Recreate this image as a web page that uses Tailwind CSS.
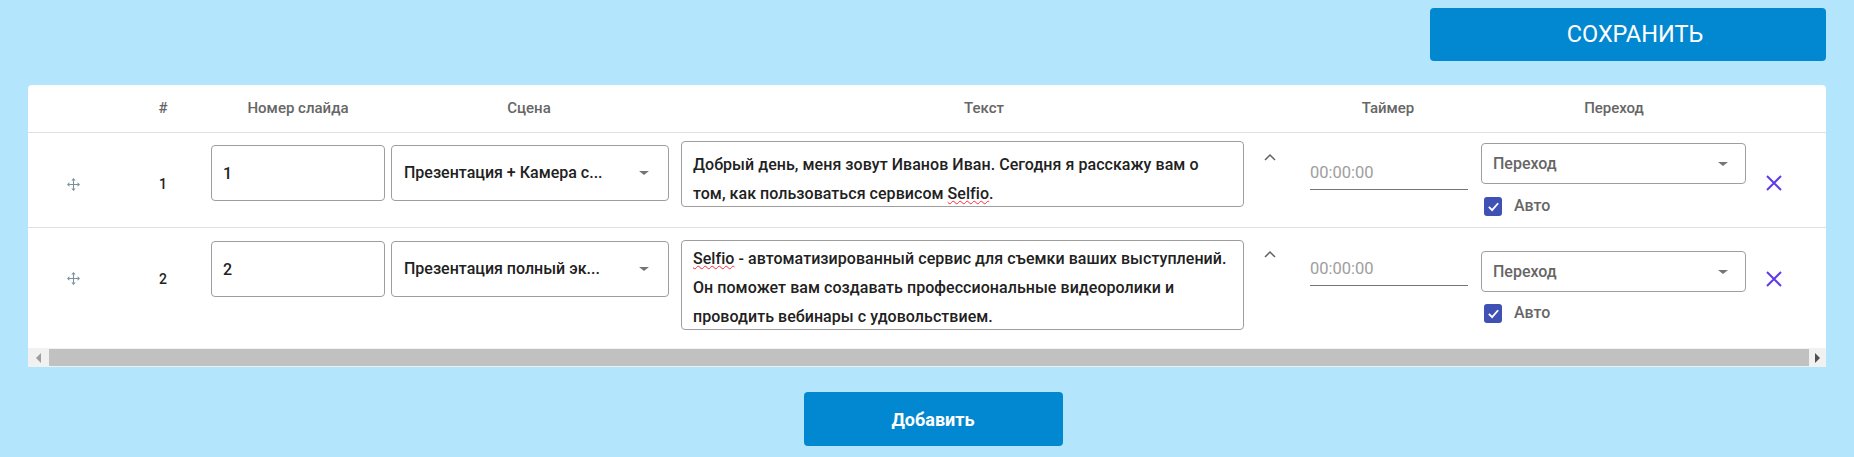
<!DOCTYPE html>
<html lang="en">
<head>
    <meta charset="UTF-8">
    <title>Сценарий</title>
    <script src="https://cdn.jsdelivr.net/npm/@tailwindcss/browser@4"></script>
</head>
<body class="bg-[#b3e5fc] h-[457px] overflow-hidden font-['Roboto',sans-serif]">
    <!-- Save -->
    <div class="flex justify-end pt-2 pr-[28px]">
        <button class="w-[396px] h-[53px] pl-[14px] bg-[#0288d1] rounded text-white text-[23.5px] uppercase">Сохранить</button>
    </div>

    <!-- Table card -->
    <div class="mx-[28px] mt-6 h-[282px] bg-white rounded-t flex flex-col">
        <div class="grid grid-cols-[90px_90px_180px_287px_618px_190px_272px_1fr] h-[48px] items-center text-center text-[15px] font-medium text-[#666] border-b border-[#e0e0e0]">
            <div></div>
            <div>#</div>
            <div>Номер слайда</div>
            <div class="pr-[5px]">Сцена</div>
            <div>Текст</div>
            <div>Таймер</div>
            <div class="pr-[10px]">Переход</div>
            <div></div>
        </div>

        <!-- Row 1 -->
        <div class="grid grid-cols-[90px_90px_180px_287px_618px_190px_272px_1fr] h-[95px] items-start border-b border-[#e0e0e0]">
            <div class="flex justify-center pt-[45px]">
                <svg class="w-[13px] h-[13px] text-[#78909c]" viewBox="0 0 12 12" fill="currentColor"><path d="M5.5 2h1v3.500H10v1H6.500V10h-1V6.500H2v-1h3.500z"/><path d="M6 0l2 2.200H4zM6 12l2-2.200H4zM0 6l2.200-2v4zM12 6l-2.200-2v4z"/></svg>
            </div>
            <div class="pt-[41px] text-center text-[14px] font-medium text-[#212121]">1</div>
            <div class="pl-[3px] pt-[12px]">
                <input value="1" class="w-[174px] h-[56px] px-[11px] border border-[#9e9e9e] rounded text-[16px] font-medium text-[#212121]">
            </div>
            <div class="pl-[3px] pt-[12px]">
                <div class="w-[278px] h-[56px] px-3 border border-[#9e9e9e] rounded flex items-center justify-between text-[16px] font-medium text-[#212121]">
                    <span>Презентация + Камера с...</span>
                    <span class="mr-[7px] border-x-[5px] border-t-[4px] border-x-transparent border-t-[#757575]"></span>
                </div>
            </div>
            <div class="flex items-start pt-[8px]">
                <div class="ml-[6px] w-[563px] h-[66px] pl-[11px] pr-[30px] pt-2 border border-[#9e9e9e] rounded text-[16px] tracking-[0.05px] font-medium leading-[29px] text-[#212121]">
                    <p>Добрый день, меня зовут Иванов Иван. Сегодня я расскажу вам о том, как пользоваться сервисом <span class="underline decoration-wavy decoration-red-500 decoration-1">Selfio</span>.</p>
                </div>
                <svg class="ml-[19px] mt-[12px] w-[14px] h-[10px] text-[#616161]" viewBox="0 0 14 10" fill="none" stroke="currentColor" stroke-width="1.500"><path d="M2 7l5-5 5 5"/></svg>
            </div>
            <div class="pl-[17px] pr-[15px] pt-[21px]">
                <div class="h-[36px] pt-[3px] border-b border-[#757575] flex items-center text-[16.5px] text-[#9e9e9e]">00:00:00</div>
            </div>
            <div class="-ml-[2px] pt-[10px]">
                <div class="w-[265px] h-[41px] px-[11px] border border-[#9e9e9e] rounded flex items-center justify-between text-[16px] font-medium text-[#666]">
                    <span>Переход</span>
                    <span class="mr-[6px] border-x-[5px] border-t-[4px] border-x-transparent border-t-[#757575]"></span>
                </div>
                <div class="mt-[10px] ml-[3px] flex items-center gap-3 text-[16px] font-medium text-[#666]">
                    <span class="w-[18px] h-[19px] rounded-[3px] bg-[#3f51b5] flex items-center justify-center">
                        <svg class="w-[13px] h-[13px]" viewBox="0 0 14 14" fill="none" stroke="white" stroke-width="2"><path d="M2 7.500l3.500 3.500L12 3.500"/></svg>
                    </span>
                    Авто
                </div>
            </div>
            <div class="pl-[10px] pt-[41px]">
                <svg class="w-[18px] h-[18px] text-[#6039ee]" viewBox="0 0 18 18" fill="none" stroke="currentColor" stroke-width="2"><path d="M2 2l14 14M16 2L2 16"/></svg>
            </div>
        </div>

        <!-- Row 2 -->
        <div class="grid grid-cols-[90px_90px_180px_287px_618px_190px_272px_1fr] h-[120px] items-start">
            <div class="flex justify-center pt-[44px]">
                <svg class="w-[13px] h-[13px] text-[#78909c]" viewBox="0 0 12 12" fill="currentColor"><path d="M5.5 2h1v3.500H10v1H6.500V10h-1V6.500H2v-1h3.500z"/><path d="M6 0l2 2.200H4zM6 12l2-2.200H4zM0 6l2.200-2v4zM12 6l-2.200-2v4z"/></svg>
            </div>
            <div class="pt-[41px] text-center text-[14px] font-medium text-[#212121]">2</div>
            <div class="pl-[3px] pt-[13px]">
                <input value="2" class="w-[174px] h-[56px] px-[11px] border border-[#9e9e9e] rounded text-[16px] font-medium text-[#212121]">
            </div>
            <div class="pl-[3px] pt-[13px]">
                <div class="w-[278px] h-[56px] px-3 border border-[#9e9e9e] rounded flex items-center justify-between text-[16px] font-medium text-[#212121]">
                    <span>Презентация полный эк...</span>
                    <span class="mr-[7px] border-x-[5px] border-t-[4px] border-x-transparent border-t-[#757575]"></span>
                </div>
            </div>
            <div class="flex items-start pt-[12px]">
                <div class="ml-[6px] w-[563px] h-[90px] px-[11px] pt-[3px] border border-[#9e9e9e] rounded text-[16px] tracking-[0.05px] font-medium leading-[29px] text-[#212121]">
                    <p><span class="underline decoration-wavy decoration-red-500 decoration-1">Selfio</span> - автоматизированный сервис для съемки ваших выступлений. Он поможет вам создавать профессиональные видеоролики и проводить вебинары с удовольствием.</p>
                </div>
                <svg class="ml-[19px] mt-[10px] w-[14px] h-[10px] text-[#616161]" viewBox="0 0 14 10" fill="none" stroke="currentColor" stroke-width="1.500"><path d="M2 7l5-5 5 5"/></svg>
            </div>
            <div class="pl-[17px] pr-[15px] pt-[22px]">
                <div class="h-[36px] pt-[3px] border-b border-[#757575] flex items-center text-[16.5px] text-[#9e9e9e]">00:00:00</div>
            </div>
            <div class="-ml-[2px] pt-[23px]">
                <div class="w-[265px] h-[41px] px-[11px] border border-[#9e9e9e] rounded flex items-center justify-between text-[16px] font-medium text-[#666]">
                    <span>Переход</span>
                    <span class="mr-[6px] border-x-[5px] border-t-[4px] border-x-transparent border-t-[#757575]"></span>
                </div>
                <div class="mt-[9px] ml-[3px] flex items-center gap-3 text-[16px] font-medium text-[#666]">
                    <span class="w-[18px] h-[19px] rounded-[3px] bg-[#3f51b5] flex items-center justify-center">
                        <svg class="w-[13px] h-[13px]" viewBox="0 0 14 14" fill="none" stroke="white" stroke-width="2"><path d="M2 7.500l3.500 3.500L12 3.500"/></svg>
                    </span>
                    Авто
                </div>
            </div>
            <div class="pl-[10px] pt-[42px]">
                <svg class="w-[18px] h-[18px] text-[#6039ee]" viewBox="0 0 18 18" fill="none" stroke="currentColor" stroke-width="2"><path d="M2 2l14 14M16 2L2 16"/></svg>
            </div>
        </div>

        <!-- Scrollbar -->
        <div class="mt-auto h-[19px] bg-[#f1f1f1] flex items-center">
            <span class="w-[21px] flex justify-center"><span class="border-y-[5px] border-r-[5px] border-y-transparent border-r-[#9e9e9e]"></span></span>
            <div class="h-[17px] w-[1760px] bg-[#c1c1c1]"></div>
            <span class="flex-1 flex justify-center"><span class="border-y-[5px] border-l-[5px] border-y-transparent border-l-[#505050]"></span></span>
        </div>
    </div>

    <!-- Add -->
    <div class="flex justify-center mt-[25px] pl-3">
        <button class="w-[259px] h-[54px] bg-[#0288d1] rounded text-white text-[18px] font-bold">Добавить</button>
    </div>
</body>
</html>
